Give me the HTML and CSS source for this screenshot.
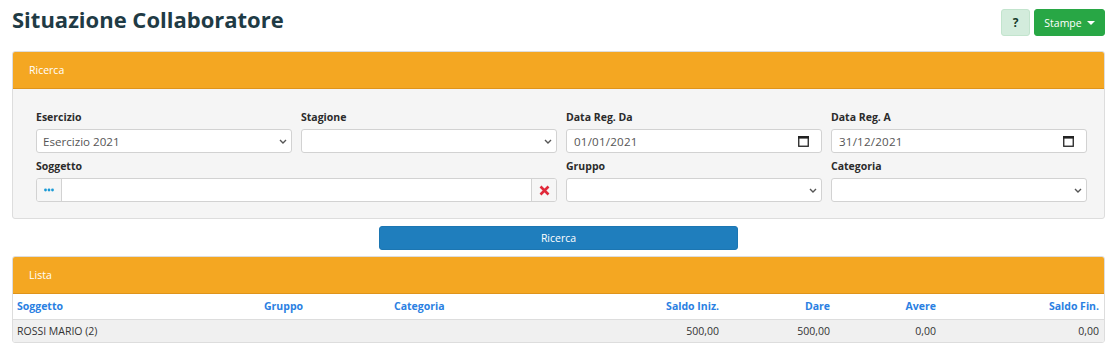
FILE: index.html
```html
<!DOCTYPE html>
<html lang="it">
<head>
<meta charset="utf-8">
<title>Situazione Collaboratore</title>
<link rel="stylesheet" href="styles.css">
</head>
<body>
<div class="page">
  <div class="topbar">
    <h1 class="title">Situazione Collaboratore</h1>
    <div class="actions">
      <button class="btn btn-help">?</button>
      <button class="btn btn-print">Stampe <span class="caret"></span></button>
    </div>
  </div>

  <div class="panel">
    <div class="panel-heading">Ricerca</div>
    <div class="panel-body">
      <div class="form-grid">
        <div class="field">
          <label class="label">Esercizio</label>
          <div class="select-wrap">
            <select class="control"><option>Esercizio 2021</option></select>
            <svg class="chev" width="8" height="5" viewBox="0 0 8 5"><path d="M1 1 L4 4 L7 1" fill="none" stroke="#555" stroke-width="1.4"/></svg>
          </div>
        </div>
        <div class="field">
          <label class="label">Stagione</label>
          <div class="select-wrap">
            <select class="control"><option></option></select>
            <svg class="chev" width="8" height="5" viewBox="0 0 8 5"><path d="M1 1 L4 4 L7 1" fill="none" stroke="#555" stroke-width="1.4"/></svg>
          </div>
        </div>
        <div class="field">
          <label class="label">Data Reg. Da</label>
          <div class="control date-control">
            <span class="date-text">01/01/2021</span>
            <svg class="cal" width="11" height="12" viewBox="0 0 11 12"><rect x="0.75" y="1.75" width="9.5" height="9.5" fill="none" stroke="#222" stroke-width="1.3"/><rect x="0" y="1" width="11" height="2.6" fill="#222"/></svg>
          </div>
        </div>
        <div class="field">
          <label class="label">Data Reg. A</label>
          <div class="control date-control">
            <span class="date-text">31/12/2021</span>
            <svg class="cal" width="11" height="12" viewBox="0 0 11 12"><rect x="0.75" y="1.75" width="9.5" height="9.5" fill="none" stroke="#222" stroke-width="1.3"/><rect x="0" y="1" width="11" height="2.6" fill="#222"/></svg>
          </div>
        </div>
        <div class="field span2">
          <label class="label">Soggetto</label>
          <div class="input-group">
            <span class="addon addon-left">
              <svg width="10" height="4" viewBox="0 0 10 4"><circle cx="1.5" cy="2" r="1.4" fill="#1a9ad6"/><circle cx="5" cy="2" r="1.4" fill="#1a9ad6"/><circle cx="8.5" cy="2" r="1.4" fill="#1a9ad6"/></svg>
            </span>
            <span class="group-input"></span>
            <span class="addon addon-right">
              <svg width="11" height="11" viewBox="0 0 11 11"><path d="M1.5 1.5 L9.5 9.5 M9.5 1.5 L1.5 9.5" stroke="#e0293a" stroke-width="2.6" stroke-linecap="butt"/></svg>
            </span>
          </div>
        </div>
        <div class="field">
          <label class="label">Gruppo</label>
          <div class="select-wrap">
            <select class="control"><option></option></select>
            <svg class="chev" width="8" height="5" viewBox="0 0 8 5"><path d="M1 1 L4 4 L7 1" fill="none" stroke="#555" stroke-width="1.4"/></svg>
          </div>
        </div>
        <div class="field">
          <label class="label">Categoria</label>
          <div class="select-wrap">
            <select class="control"><option></option></select>
            <svg class="chev" width="8" height="5" viewBox="0 0 8 5"><path d="M1 1 L4 4 L7 1" fill="none" stroke="#555" stroke-width="1.4"/></svg>
          </div>
        </div>
      </div>
    </div>
  </div>

  <button class="btn btn-search">Ricerca</button>

  <div class="panel panel-list">
    <div class="panel-heading">Lista</div>
    <table class="grid">
      <colgroup>
        <col class="c-sogg"><col class="c-grp"><col class="c-cat"><col class="c-si"><col class="c-dare"><col class="c-avere"><col class="c-sf">
      </colgroup>
      <thead>
        <tr>
          <th>Soggetto</th>
          <th>Gruppo</th>
          <th>Categoria</th>
          <th class="num">Saldo Iniz.</th>
          <th class="num">Dare</th>
          <th class="num">Avere</th>
          <th class="num">Saldo Fin.</th>
        </tr>
      </thead>
      <tbody>
        <tr>
          <td>ROSSI MARIO (2)</td>
          <td></td>
          <td></td>
          <td class="num">500,00</td>
          <td class="num">500,00</td>
          <td class="num">0,00</td>
          <td class="num">0,00</td>
        </tr>
      </tbody>
    </table>
  </div>
</div>
</body>
</html>
```

FILE: styles.css
```css
* { box-sizing: border-box; }

html, body {
  margin: 0;
  padding: 0;
  background: #ffffff;
}

body {
  font-family: "Open Sans", "Liberation Sans", sans-serif;
  font-size: 10.5px;
  color: #333333;
}

.page {
  padding: 0 13px 0 12px;
}

.topbar {
  display: flex;
  justify-content: space-between;
  align-items: flex-start;
  height: 35px;
}

.title {
  margin: 6px 0 0 0;
  font-size: 22px;
  line-height: 26px;
  font-weight: 700;
  color: #1f3b45;
}

.actions {
  display: flex;
  gap: 4px;
  margin-top: 9px;
}

.btn {
  font-family: "Open Sans", "Liberation Sans", sans-serif;
  font-size: 10.5px;
  border: 1px solid transparent;
  border-radius: 3px;
  cursor: pointer;
  padding: 0;
}

.btn-help {
  width: 29px;
  height: 27px;
  background: #d3ecdc;
  border-color: #c2e4cd;
  color: #173a2a;
  font-weight: 700;
  font-size: 12px;
}

.btn-print {
  width: 71px;
  height: 27px;
  background: #28a745;
  border-color: #28a745;
  color: #ffffff;
  display: flex;
  align-items: center;
  justify-content: center;
  gap: 5px;
}

.caret {
  width: 0;
  height: 0;
  border-left: 4px solid transparent;
  border-right: 4px solid transparent;
  border-top: 4px solid #ffffff;
}

.panel {
  margin-top: 16px;
  border: 1px solid #dddddd;
  border-radius: 3px;
  background: #f5f5f5;
  overflow: hidden;
}

.panel-heading {
  height: 37px;
  background: #f4a722;
  border-bottom: 1px solid #df941b;
  color: #ffffff;
  padding: 0 16px;
  display: flex;
  align-items: center;
  font-size: 10.5px;
}

.panel-body {
  padding: 20px 17px 16px 23px;
}

.form-grid {
  display: grid;
  grid-template-columns: repeat(4, 1fr);
  column-gap: 9px;
  row-gap: 5px;
}

.span2 {
  grid-column: span 2;
}

.field {
  display: flex;
  flex-direction: column;
}

.label {
  font-weight: 700;
  line-height: 16px;
  margin-bottom: 4px;
  color: #2b2b2b;
}

.control {
  height: 24px;
  border: 1px solid #d2d2d2;
  border-radius: 3px;
  background: #ffffff;
  font-family: "Open Sans", "Liberation Sans", sans-serif;
  font-size: 11.6px;
  color: #555555;
  padding: 0 18px 0 6px;
  width: 100%;
}

.select-wrap {
  position: relative;
}

.select-wrap select {
  appearance: none;
  -webkit-appearance: none;
  display: block;
}

.chev {
  position: absolute;
  right: 5px;
  top: 10px;
  pointer-events: none;
}

.date-control {
  display: flex;
  align-items: center;
  justify-content: space-between;
  padding: 0 12px 0 7px;
}

.date-text {
  color: #555555;
  letter-spacing: 0.2px;
}

.cal {
  display: block;
}

.input-group {
  display: flex;
  height: 24px;
  border: 1px solid #d2d2d2;
  border-radius: 3px;
  background: #ffffff;
  overflow: hidden;
}

.addon {
  width: 25px;
  display: flex;
  align-items: center;
  justify-content: center;
  background: #f6f6f6;
}

.addon-left {
  border-right: 1px solid #d2d2d2;
}

.addon-right {
  border-left: 1px solid #d2d2d2;
}

.group-input {
  flex: 1;
}

.btn-search {
  display: block;
  width: 359px;
  height: 24px;
  margin: 7px auto 0;
  background: #1f7ebd;
  border-color: #1c76b2;
  color: #ffffff;
}

.panel-list {
  margin-top: 6px;
  background: #ffffff;
}

.grid {
  width: 100%;
  border-collapse: collapse;
  table-layout: fixed;
}

.c-sogg { width: 247px; }
.c-grp { width: 130px; }
.c-cat { width: 170px; }
.c-si { width: 164px; }
.c-dare { width: 111px; }
.c-avere { width: 106px; }
.c-sf { width: 163px; }

.grid th {
  height: 25px;
  text-align: left;
  font-weight: 700;
  color: #2a80e2;
  padding: 0 5px 0 4px;
  border-bottom: 1px solid #dddddd;
  background: #ffffff;
}

.grid td {
  height: 23px;
  padding: 0 5px 0 4px;
  background: #f0f0f0;
  color: #333333;
}

.grid .num {
  text-align: right;
}
```
